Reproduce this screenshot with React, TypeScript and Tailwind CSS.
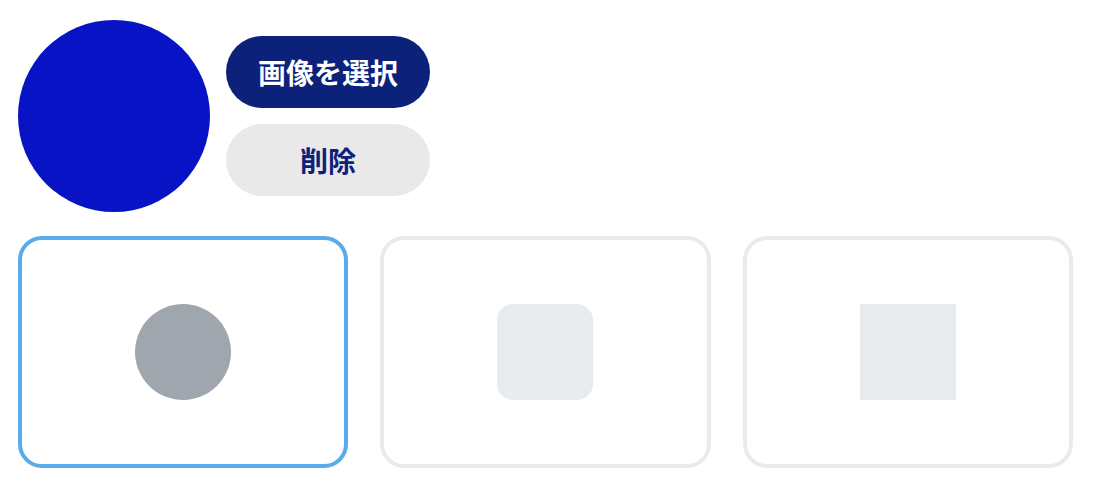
import React from "react";

export default function App() {
  const font = { fontFamily: '"Noto Sans CJK JP", "Noto Sans", sans-serif' };
  return (
    <div className="bg-white w-[1096px] h-[486px] pl-[18px] pt-[20px]" style={font}>
      <div className="flex items-center gap-4">
        <div className="w-[192px] h-[192px] rounded-full bg-[#0713c4]" />
        <div className="flex flex-col gap-4">
          <button className="w-[204px] h-[72px] rounded-full bg-[#0c227a] text-white text-[28px] font-bold leading-none">
            画像を選択
          </button>
          <button className="w-[204px] h-[72px] rounded-full bg-[#e9e9e9] text-[#0c227a] text-[28px] font-bold leading-none">
            削除
          </button>
        </div>
      </div>
      <div className="grid grid-cols-3 gap-8 w-[1055px] mt-6">
        <div className="h-[232px] rounded-3xl border-4 border-[#5aabea] flex items-center justify-center">
          <div className="w-24 h-24 rounded-full bg-[#a0a6ad]" />
        </div>
        <div className="h-[232px] rounded-3xl border-4 border-[#e8ebee] flex items-center justify-center">
          <div className="w-24 h-24 rounded-2xl bg-[#e9ecef]" />
        </div>
        <div className="h-[232px] rounded-3xl border-4 border-[#e8ebee] flex items-center justify-center">
          <div className="w-24 h-24 bg-[#e9ecef]" />
        </div>
      </div>
    </div>
  );
}
